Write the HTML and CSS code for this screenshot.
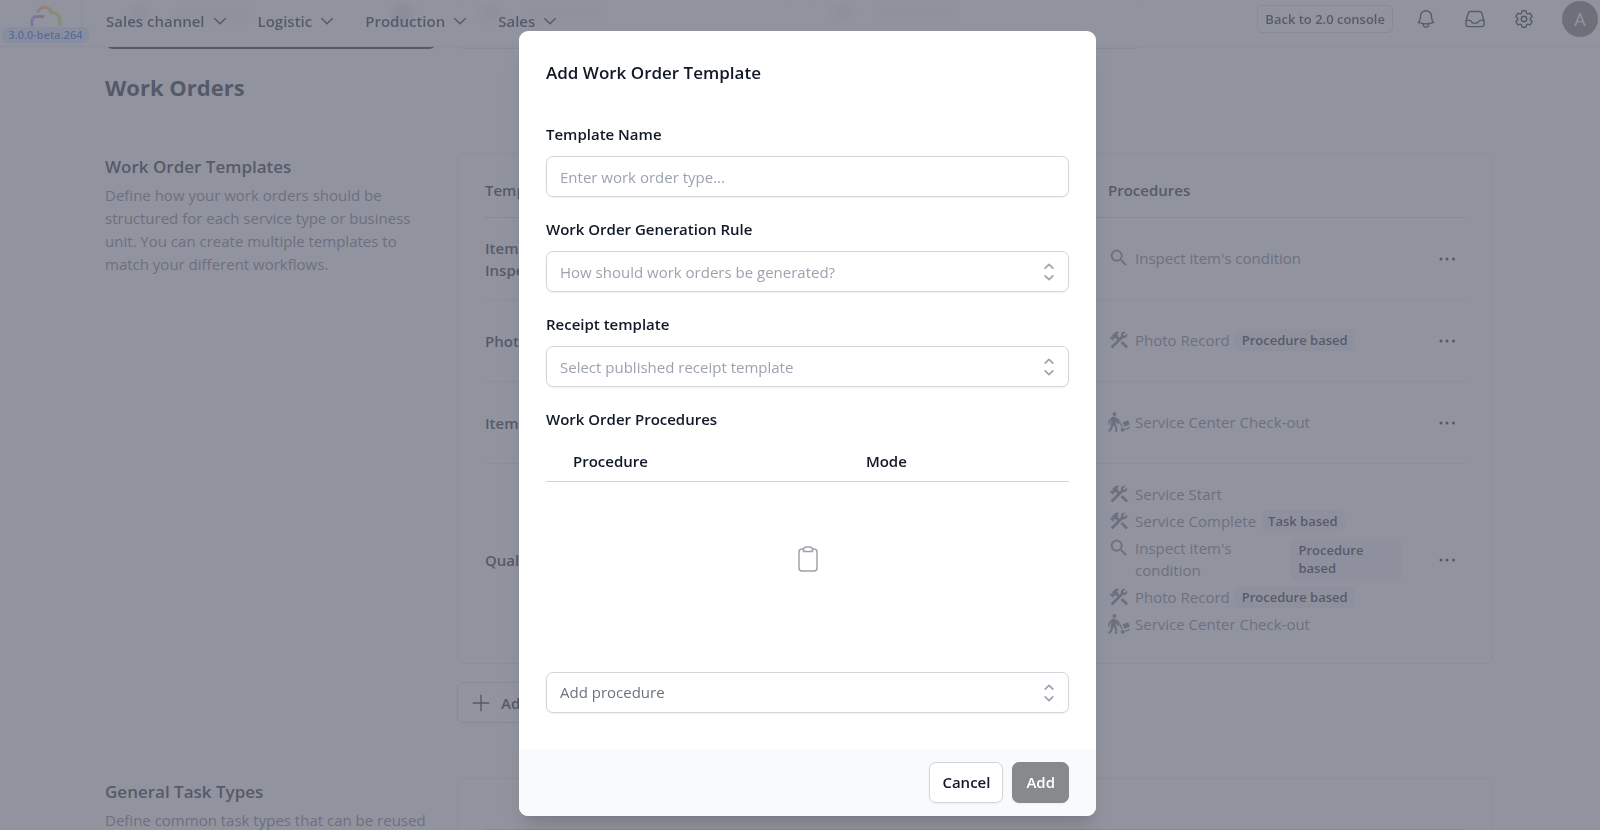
FILE: index.html
```html
<!DOCTYPE html>
<html lang="en">
<head>
  <meta charset="UTF-8">
  <meta name="viewport" content="width=device-width, initial-scale=1.0">
  <title>Work Orders</title>
  <link rel="stylesheet" href="styles.css">
</head>
<body>
  <!-- shared icons -->
  <svg class="sprite" aria-hidden="true">
    <symbol id="chevron" viewBox="0 0 24 24"><path d="M19.5 8.25l-7.5 7.5-7.5-7.5"/></symbol>
    <symbol id="search" viewBox="0 0 24 24"><path d="M15.5 14h-.79l-.28-.27C15.41 12.59 16 11.11 16 9.5 16 5.91 13.09 3 9.5 3S3 5.91 3 9.5 5.91 16 9.5 16c1.61 0 3.09-.59 4.23-1.57l.27.28v.79l5 4.99L20.49 19l-4.99-5zm-6 0C7.01 14 5 11.99 5 9.5S7.01 5 9.5 5 14 7.01 14 9.5 11.99 14 9.5 14z"/></symbol>
    <symbol id="tools" viewBox="0 0 24 24"><path d="M13.78 15.17l2.12-2.12 6 6-2.12 2.12z"/><path d="M17.5 10c1.93 0 3.5-1.57 3.5-3.5 0-.58-.16-1.12-.41-1.6l-2.7 2.7-1.49-1.49 2.7-2.7c-.48-.25-1.02-.41-1.6-.41C15.57 3 14 4.57 14 6.5c0 .41.08.8.21 1.16l-1.85 1.85-1.78-1.78.71-.71-1.41-1.41L12 3.49c-1.17-1.17-3.07-1.17-4.24 0L4.22 7.03l1.41 1.41H2.81l-.71.71 3.54 3.54.71-.71V9.15l1.41 1.41.71-.71 1.78 1.78-7.41 7.41 2.12 2.12L16.34 9.79c.36.13.75.21 1.16.21z"/></symbol>
    <symbol id="trolley" viewBox="0 0 24 24"><circle cx="7" cy="3.2" r="2.2"/><path d="M4.5 6.2h3.8l2.4 3.6 1.2 4.2-1.3.6-2.2-3.6v3.4l1.6 2.8V23H8v-5l-2.2-2.8L4.700 19.500 1.600 23 .200 21.600l2.500-3.600 1-7.600-1.700 1.400V15H.5v-4.200z"/><path d="M9.800 8.500l1.200-.8 5.200 9.300-1.300.8z"/><circle cx="16" cy="20.500" r="2.200"/><path d="M16 12.500l6-2.500 1.800 4.800-5.800 2.400zM18.600 19.300l4.800-2 .6 1.300-4.800 2z"/></symbol>
    <symbol id="dots" viewBox="0 0 18 4"><circle cx="2" cy="2" r="1.500"/><circle cx="8" cy="2" r="1.500"/><circle cx="14.500" cy="2" r="1.500"/></symbol>
  </svg>

  <header class="topbar">
    <div class="brand">
      <svg class="logo" viewBox="0 0 34 22" fill="none" stroke-width="3" stroke-linecap="round">
        <path d="M9 6.500C12 1 20 .500 23 8" stroke="#fdba74"/>
        <path d="M23 8c7-1 9 6 7.500 12" stroke="#bef264"/>
        <path d="M14 11.500H8" stroke="#fb7185"/>
        <path d="M8 11.500c-4 0-6 4-5 8.500" stroke="#c084fc"/>
      </svg>
      <span class="version">3.0.0-beta.264</span>
    </div>
    <nav class="menu">
      <button type="button">Sales channel <svg><use href="#chevron"/></svg></button>
      <button type="button">Logistic <svg><use href="#chevron"/></svg></button>
      <button type="button">Production <svg><use href="#chevron"/></svg></button>
      <button type="button">Sales <svg><use href="#chevron"/></svg></button>
    </nav>
    <div class="actions">
      <a class="back" href="#">Back to 2.0 console</a>
      <button type="button" aria-label="Notifications"><svg viewBox="0 0 24 24"><path d="M14.857 17.082a23.848 23.848 0 005.454-1.31A8.967 8.967 0 0118 9.75v-.7V9A6 6 0 006 9v.75a8.967 8.967 0 01-2.312 6.022c1.733.64 3.56 1.085 5.455 1.31m5.714 0a24.255 24.255 0 01-5.714 0m5.714 0a3 3 0 11-5.714 0"/></svg></button>
      <button type="button" aria-label="Inbox"><svg viewBox="0 0 24 24"><path d="M2.25 13.5h3.86a2.25 2.25 0 012.012 1.244l.256.512a2.25 2.25 0 002.013 1.244h3.218a2.25 2.25 0 002.013-1.244l.256-.512a2.25 2.25 0 012.013-1.244h3.859m-19.5.338V18a2.25 2.25 0 002.25 2.25h15A2.25 2.25 0 0021.75 18v-4.162c0-.224-.034-.447-.1-.661L19.24 5.338a2.25 2.25 0 00-2.15-1.588H6.911a2.25 2.25 0 00-2.15 1.588L2.35 13.177a2.25 2.25 0 00-.1.661z"/></svg></button>
      <button type="button" aria-label="Settings"><svg viewBox="0 0 24 24"><path d="M9.594 3.94c.09-.542.56-.94 1.11-.94h2.593c.55 0 1.02.398 1.11.94l.213 1.281c.063.374.313.686.645.87.074.04.147.083.22.127.324.196.72.257 1.075.124l1.217-.456a1.125 1.125 0 011.37.49l1.296 2.247a1.125 1.125 0 01-.26 1.431l-1.003.827c-.293.24-.438.613-.431.992a6.759 6.759 0 010 .255c-.007.378.138.75.43.99l1.005.828c.424.35.534.954.26 1.43l-1.298 2.247a1.125 1.125 0 01-1.369.491l-1.217-.456c-.355-.133-.75-.072-1.076.124a6.57 6.57 0 01-.22.128c-.331.183-.581.495-.644.869l-.213 1.28c-.09.543-.56.941-1.11.941h-2.594c-.55 0-1.02-.398-1.11-.94l-.213-1.281c-.062-.374-.312-.686-.644-.87a6.52 6.52 0 01-.22-.127c-.325-.196-.72-.257-1.076-.124l-1.217.456a1.125 1.125 0 01-1.369-.49l-1.297-2.247a1.125 1.125 0 01.26-1.431l1.004-.827c.292-.24.437-.613.43-.992a6.932 6.932 0 010-.255c.007-.378-.138-.75-.43-.99l-1.004-.828a1.125 1.125 0 01-.26-1.43l1.297-2.247a1.125 1.125 0 011.37-.491l1.216.456c.356.133.751.072 1.076-.124.072-.044.146-.087.22-.128.332-.183.582-.495.644-.869l.214-1.281z"/><circle cx="12" cy="12" r="3"/></svg></button>
      <button type="button" class="avatar" aria-label="Account">A</button>
    </div>
  </header>

  <main>
    <div class="tabs">
      <div class="tab active"><i class="tab-icon"></i><i class="tab-bar"></i><i class="tab-check"></i></div>
      <div class="tab"><i class="tab-icon"></i><i class="tab-bar"></i></div>
      <div class="tab"><i class="tab-icon"></i><i class="tab-bar"></i></div>
    </div>

    <h1>Work Orders</h1>

    <section class="block">
      <div class="intro">
        <h2>Work Order Templates</h2>
        <p>Define how your work orders should be structured for each service type or business unit. You can create multiple templates to match your different workflows.</p>
      </div>
      <div class="content">
        <div class="card">
          <table class="templates">
            <thead>
              <tr><th class="col-name">Template</th><th class="col-proc">Procedures</th><th class="col-more"></th></tr>
            </thead>
            <tbody>
              <tr>
                <td>Item<br>Inspection</td>
                <td><div class="item"><svg><use href="#search"/></svg><span>Inspect item's condition</span></div></td>
                <td class="more"><button type="button" aria-label="More"><svg><use href="#dots"/></svg></button></td>
              </tr>
              <tr>
                <td>Photo</td>
                <td><div class="item"><svg><use href="#tools"/></svg><span>Photo Record</span><b class="badge">Procedure based</b></div></td>
                <td class="more"><button type="button" aria-label="More"><svg><use href="#dots"/></svg></button></td>
              </tr>
              <tr>
                <td>Item</td>
                <td><div class="item"><svg><use href="#trolley"/></svg><span>Service Center Check-out</span></div></td>
                <td class="more"><button type="button" aria-label="More"><svg><use href="#dots"/></svg></button></td>
              </tr>
              <tr>
                <td>Quality</td>
                <td>
                  <div class="item"><svg><use href="#tools"/></svg><span>Service Start</span></div>
                  <div class="item"><svg><use href="#tools"/></svg><span>Service Complete</span><b class="badge">Task based</b></div>
                  <div class="item"><svg><use href="#search"/></svg><span>Inspect item's condition</span><b class="badge">Procedure based</b></div>
                  <div class="item"><svg><use href="#tools"/></svg><span>Photo Record</span><b class="badge">Procedure based</b></div>
                  <div class="item"><svg><use href="#trolley"/></svg><span>Service Center Check-out</span></div>
                </td>
                <td class="more"><button type="button" aria-label="More"><svg><use href="#dots"/></svg></button></td>
              </tr>
            </tbody>
          </table>
        </div>
        <button type="button" class="btn add-template"><svg viewBox="0 0 24 24"><path d="M12 3v18M3 12h18"/></svg>Add</button>
      </div>
    </section>

    <section class="block">
      <div class="intro">
        <h2>General Task Types</h2>
        <p>Define common task types that can be reused</p>
      </div>
      <div class="content card"><div class="tasks-head"></div></div>
    </section>
  </main>

  <div class="overlay">
    <form class="modal" role="dialog" aria-labelledby="modal-title">
      <div class="modal-body">
        <h3 id="modal-title">Add Work Order Template</h3>
        <div class="field">
          <label for="name">Template Name</label>
          <input id="name" type="text" placeholder="Enter work order type...">
        </div>
        <div class="field">
          <label for="rule">Work Order Generation Rule</label>
          <div class="select">
            <select id="rule"><option>How should work orders be generated?</option></select>
            <svg viewBox="0 0 20 20"><path d="M6.500 6.500L10 3l3.500 3.500M6.500 13.500L10 17l3.500-3.500"/></svg>
          </div>
        </div>
        <div class="field">
          <label for="receipt">Receipt template</label>
          <div class="select">
            <select id="receipt"><option>Select published receipt template</option></select>
            <svg viewBox="0 0 20 20"><path d="M6.500 6.500L10 3l3.500 3.500M6.500 13.500L10 17l3.500-3.500"/></svg>
          </div>
        </div>
        <div class="field">
          <label for="procedure">Work Order Procedures</label>
          <table class="procedures">
            <thead><tr><th>Procedure</th><th>Mode</th></tr></thead>
            <tbody>
              <tr><td colspan="2"><svg viewBox="0 0 24 28"><rect x="3" y="4" width="18" height="22" rx="3"/><path class="clip" d="M7.500 6.500V5C7.500 3 9 2 10.500 2h3C15 2 16.500 3 16.500 5v1.500z"/></svg></td></tr>
            </tbody>
          </table>
        </div>
        <div class="select">
          <select id="procedure" class="dark"><option>Add procedure</option></select>
          <svg viewBox="0 0 20 20"><path d="M6.500 6.500L10 3l3.500 3.500M6.500 13.500L10 17l3.500-3.500"/></svg>
        </div>
      </div>
      <div class="modal-footer">
        <button type="button" class="btn">Cancel</button>
        <button type="submit" class="btn primary" disabled>Add</button>
      </div>
    </form>
  </div>
</body>
</html>
```
FILE: styles.css
```css
* {
  box-sizing: border-box;
}
body {
  margin: 0;
  height: 100vh;
  overflow: hidden;
  font-family: "Open Sans", "Noto Sans", sans-serif;
  font-size: 15px;
  line-height: 22px;
  color: #111827;
  background: #fff;
}
h1, h2, h3, p {
  margin: 0;
}
button, input, select {
  font: inherit;
  color: inherit;
}
button {
  border: none;
  background: none;
  padding: 0;
  cursor: pointer;
}
.sprite {
  display: none;
}

/* top bar */
.topbar {
  position: fixed;
  top: 0;
  left: 0;
  right: 0;
  z-index: 10;
  height: 47px;
  display: flex;
  align-items: stretch;
  background: rgba(255,255,255,0.8);
  backdrop-filter: blur(6px);
  border-bottom: 1px solid #e5e7eb;
}
.brand {
  width: 82px;
  display: flex;
  flex-direction: column;
  align-items: center;
  justify-content: flex-end;
  padding: 0 0 3px 10px;
  border-right: 1px solid #f0f1f3;
}
.logo {
  width: 34px;
  height: 22px;
}
.version {
  padding: 0 6px;
  border-radius: 6px;
  background: #dbeafe;
  color: #2563eb;
  font-size: 11px;
  line-height: 16px;
  font-weight: 600;
  white-space: nowrap;
}
.menu {
  display: flex;
  gap: 29px;
  padding: 0 0 5px 24px;
}
.menu button {
  display: flex;
  align-items: center;
  gap: 6px;
  font-weight: 600;
}
.menu svg {
  width: 18px;
  height: 18px;
  fill: none;
  stroke: currentColor;
  stroke-width: 2;
}
.actions {
  display: flex;
  align-items: center;
  gap: 27px;
  margin-left: auto;
  padding: 0 2px 9px 0;
}
.actions svg {
  display: block;
  width: 22px;
  height: 22px;
  fill: none;
  stroke: currentColor;
  stroke-width: 1.5;
}
.back {
  padding: 1px 7px;
  margin-right: -5px;
  border: 1px solid #d1d5db;
  border-radius: 5px;
  color: inherit;
  font-size: 13px;
  line-height: 24px;
  font-weight: 600;
  text-decoration: none;
}
.avatar {
  width: 36px;
  height: 36px;
  border-radius: 50%;
  background: #78716c;
  color: #fff;
  font-size: 18px;
}

/* page */
main {
  padding: 0 107px 0 105px;
}
.tabs, .block {
  display: grid;
  grid-template-columns: repeat(4, 1fr);
  gap: 20px;
}
.tab {
  display: flex;
  align-items: center;
  gap: 24px;
  height: 49px;
  padding: 0 22px 20px;
  border: 1px solid #d1d5db;
  border-top: none;
  border-radius: 0 0 8px 8px;
}
.tab.active {
  border: 2px solid #111827;
  border-color: transparent transparent #111827;
}
.tab-icon, .tab-check {
  width: 20px;
  height: 20px;
  border-radius: 50%;
  background: #9ca3af;
}
.tab-bar {
  width: 80px;
  height: 10px;
  background: #b4b8c0;
}
.tab-check {
  margin-left: auto;
  background: #4b5563;
}
h1 {
  padding: 23px 0 50px;
  font-size: 22px;
  line-height: 31px;
  font-weight: 700;
}
.block {
  margin-bottom: 55px;
}
.content {
  grid-column: span 3;
}
h2 {
  font-size: 17px;
  line-height: 28px;
  font-weight: 600;
}
.intro p {
  margin-top: 3px;
  line-height: 23px;
  font-weight: 500;
  color: #6b7280;
}
.card {
  padding: 0 27px 8px;
  border: 1px solid #e5e7eb;
  border-radius: 8px;
}
.templates {
  width: 100%;
  table-layout: fixed;
  border-collapse: collapse;
}
.templates th {
  padding: 25px 0 16px;
  border-bottom: 1px solid #d1d5db;
  text-align: left;
  font-weight: 600;
}
.templates td {
  height: 82px;
  padding: 17px 0;
  font-weight: 600;
  border-bottom: 1px solid #e5e7eb;
}
.templates tr:last-child td {
  border-bottom: none;
}
.templates .col-proc {
  width: 294px;
}
.templates .col-more {
  width: 63px;
}
.item {
  display: flex;
  gap: 5px;
  padding: 2px 0 3px;
  font-weight: 400;
  color: #6b7280;
}
.item svg {
  flex: none;
  width: 22px;
  height: 22px;
  fill: currentColor;
}
.badge {
  display: flex;
  align-items: center;
  padding: 0 7px;
  border-radius: 6px;
  background: #f3f7f8;
  color: #111827;
  font-size: 13px;
  line-height: 18px;
  font-weight: 600;
}
.more button {
  display: block;
  margin-left: auto;
  padding: 8px;
}
.more svg {
  display: block;
  width: 18px;
  height: 4px;
  fill: currentColor;
}
.btn {
  display: inline-flex;
  align-items: center;
  height: 41px;
  padding: 0 12px;
  border: 1px solid #d1d5db;
  border-radius: 7px;
  background: #fff;
  font-weight: 600;
  box-shadow: 0 1px 2px rgba(0,0,0,0.05);
}
.add-template {
  gap: 9px;
  width: 180px;
  margin-top: 18px;
}
.add-template svg {
  width: 22px;
  height: 22px;
  fill: none;
  stroke: currentColor;
  stroke-width: 1.5;
}
.tasks-head {
  height: 51px;
  border-bottom: 1px solid #d1d5db;
}

/* modal */
.overlay {
  position: fixed;
  inset: 0;
  z-index: 20;
  display: flex;
  justify-content: center;
  align-items: flex-start;
  padding: 31px 0 14px 15px;
  background: rgba(108,111,127,0.75);
}
.modal {
  width: 100%;
  max-width: 577px;
  border-radius: 9px;
  background: #fff;
  overflow: hidden;
  box-shadow: 0 20px 25px -5px rgba(0,0,0,0.1), 0 8px 10px -6px rgba(0,0,0,0.1);
}
.modal-body {
  padding: 28px 27px 36px;
}
h3 {
  margin-bottom: 36px;
  font-size: 17px;
  line-height: 28px;
  font-weight: 600;
}
.field {
  margin-bottom: 21px;
}
.field label {
  display: block;
  margin-bottom: 11px;
  font-weight: 600;
}
input, select {
  display: block;
  width: 100%;
  height: 41px;
  padding: 0 13px;
  border: 1px solid #d1d5db;
  border-radius: 7px;
  background: #fff;
  box-shadow: 0 1px 2px rgba(0,0,0,0.05);
}
select {
  appearance: none;
  color: #9ca3af;
}
select.dark {
  color: #6b7280;
}
input::placeholder {
  color: #9ca3af;
}
.select {
  position: relative;
}
.select svg {
  position: absolute;
  top: 10px;
  right: 9px;
  width: 22px;
  height: 22px;
  fill: none;
  stroke: #9ca3af;
  stroke-width: 1.5;
  stroke-linecap: round;
  stroke-linejoin: round;
  pointer-events: none;
}
.procedures {
  width: 100%;
  border-collapse: collapse;
}
.procedures th {
  width: 56%;
  padding: 9px 0 9px 27px;
  border-bottom: 1px solid #d1d5db;
  text-align: left;
  font-weight: 600;
}
.procedures th + th {
  width: 44%;
}
.procedures td {
  height: 169px;
  padding: 0 0 10px;
  text-align: center;
}
.procedures svg {
  width: 24px;
  height: 28px;
  fill: none;
  stroke: #9ca3af;
  stroke-width: 1.5;
}
.procedures .clip {
  fill: #fff;
}
.modal-footer {
  display: flex;
  justify-content: flex-end;
  gap: 9px;
  padding: 13px 27px;
  background: #f9fafb;
}
.btn.primary {
  padding: 0 13px;
  border-color: #88898b;
  background: #88898b;
  color: #fff;
}
```
